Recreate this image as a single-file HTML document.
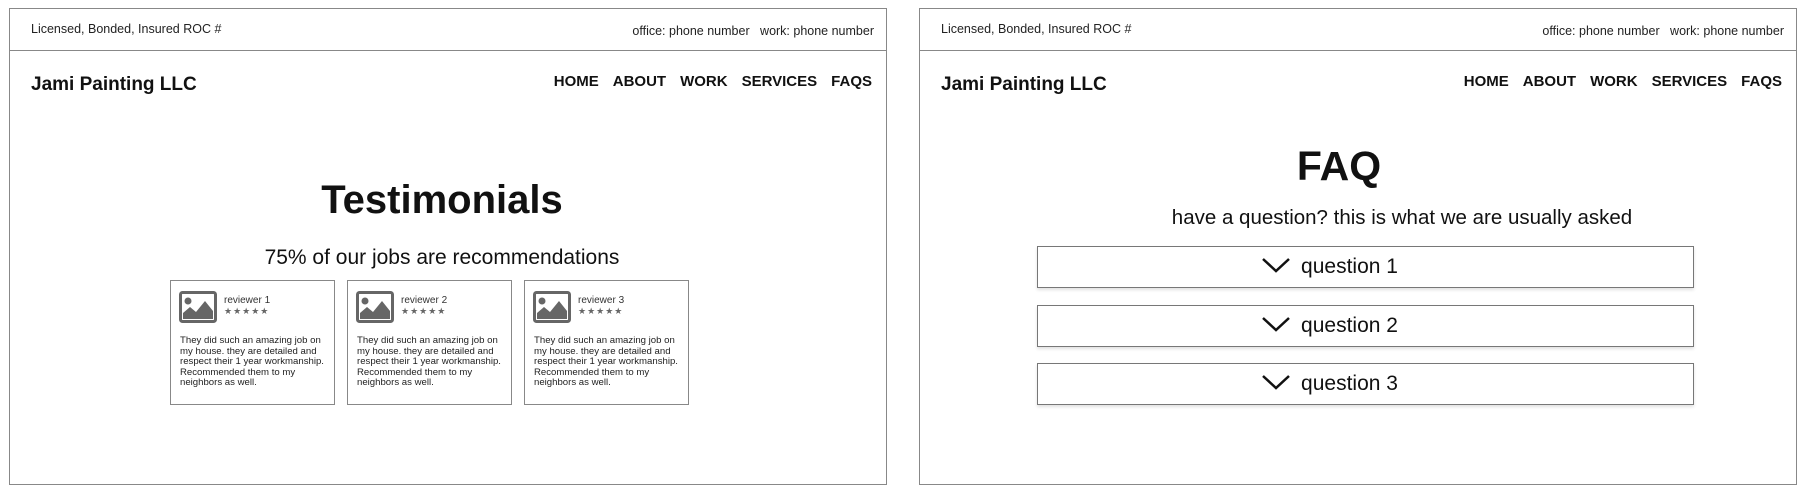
<!DOCTYPE html>
<html><head><meta charset="utf-8"><style>
*{margin:0;padding:0;box-sizing:border-box}
body{width:1810px;height:496px;background:#fff;position:relative;overflow:hidden;font-family:"Liberation Sans",Arial,sans-serif;color:#111}
.a{position:absolute;white-space:nowrap}
.panel{position:absolute;top:8px;height:477px;border:1px solid #888;width:878px}
.hline{position:absolute;left:0;right:0;top:41px;border-top:1px solid #888}
.lic{left:21px;top:13px;font-size:12.5px;color:#222}
.ph{right:12px;top:15px;font-size:12.5px;color:#222}
.logo{left:21px;top:65px;font-size:19px;font-weight:bold}
.nav{right:14px;top:64px;font-size:15px;font-weight:bold}
.nav span{margin-left:14px}
.card{position:absolute;top:280px;width:165px;height:125px;border:1px solid #888}
.card .img{position:absolute;left:8px;top:10px;width:38px;height:32px}
.card .rv{position:absolute;left:53px;top:14px;font-size:10px;color:#333}
.card .st{position:absolute;left:53px;top:25px;font-size:9px;color:#666;letter-spacing:1px}
.card .tx{position:absolute;left:9px;top:55px;font-size:9.6px;line-height:10.5px;color:#222;width:155px}
.q{position:absolute;left:117px;width:657px;height:42px;border:1px solid #777;box-shadow:0 2px 3px rgba(0,0,0,.12);font-size:21px;text-align:center;line-height:40px;padding-right:72px}
.q svg{vertical-align:middle;margin-right:10px;margin-top:-4px}
</style></head><body>
<div class="panel" style="left:9px">
 <div class="a lic">Licensed, Bonded, Insured ROC #</div>
 <div class="a ph">office: phone number &nbsp; work: phone number</div>
 <div class="hline"></div>
 <div class="a logo">Jami Painting LLC</div>
 <div class="a nav">HOME<span>ABOUT</span><span>WORK</span><span>SERVICES</span><span>FAQS</span></div>
 <div class="a" style="left:0;width:864px;text-align:center;top:169px;font-size:40px;font-weight:bold">Testimonials</div>
 <div class="a" style="left:0;width:864px;text-align:center;top:237px;font-size:21px">75% of our jobs are recommendations</div>
</div>
<div class="panel" style="left:919px">
 <div class="a lic">Licensed, Bonded, Insured ROC #</div>
 <div class="a ph">office: phone number &nbsp; work: phone number</div>
 <div class="hline"></div>
 <div class="a logo">Jami Painting LLC</div>
 <div class="a nav">HOME<span>ABOUT</span><span>WORK</span><span>SERVICES</span><span>FAQS</span></div>
 <div class="a" style="left:0;width:838px;text-align:center;top:134px;font-size:41px;font-weight:bold">FAQ</div>
 <div class="a" style="left:0;width:964px;text-align:center;top:197px;font-size:20.5px">have a question? this is what we are usually asked</div>
 <div class="q" style="top:237px"><svg width="30" height="18" viewBox="0 0 30 18"><path d="M2 3 L15 15 L28 3" fill="none" stroke="#111" stroke-width="2.5"/></svg>question 1</div>
 <div class="q" style="top:296px"><svg width="30" height="18" viewBox="0 0 30 18"><path d="M2 3 L15 15 L28 3" fill="none" stroke="#111" stroke-width="2.5"/></svg>question 2</div>
 <div class="q" style="top:354px"><svg width="30" height="18" viewBox="0 0 30 18"><path d="M2 3 L15 15 L28 3" fill="none" stroke="#111" stroke-width="2.5"/></svg>question 3</div>
</div>
<div class="card" style="left:170px"><svg class="img" viewBox="0 0 38 32"><rect x="1.5" y="1.5" width="35" height="29" rx="2" fill="none" stroke="#666" stroke-width="3"/><circle cx="9" cy="10" r="3.5" fill="#666"/><path d="M4 28 L4 22 L11 16 L17 21 L26 10 L34 20 L34 28Z" fill="#666"/></svg><div class="rv">reviewer 1</div><div class="st">★★★★★</div><div class="tx">They did such an amazing job on my house. they are detailed and respect their 1 year workmanship. Recommended them to my neighbors as well.</div></div>
<div class="card" style="left:347px"><svg class="img" viewBox="0 0 38 32"><rect x="1.5" y="1.5" width="35" height="29" rx="2" fill="none" stroke="#666" stroke-width="3"/><circle cx="9" cy="10" r="3.5" fill="#666"/><path d="M4 28 L4 22 L11 16 L17 21 L26 10 L34 20 L34 28Z" fill="#666"/></svg><div class="rv">reviewer 2</div><div class="st">★★★★★</div><div class="tx">They did such an amazing job on my house. they are detailed and respect their 1 year workmanship. Recommended them to my neighbors as well.</div></div>
<div class="card" style="left:524px"><svg class="img" viewBox="0 0 38 32"><rect x="1.5" y="1.5" width="35" height="29" rx="2" fill="none" stroke="#666" stroke-width="3"/><circle cx="9" cy="10" r="3.5" fill="#666"/><path d="M4 28 L4 22 L11 16 L17 21 L26 10 L34 20 L34 28Z" fill="#666"/></svg><div class="rv">reviewer 3</div><div class="st">★★★★★</div><div class="tx">They did such an amazing job on my house. they are detailed and respect their 1 year workmanship. Recommended them to my neighbors as well.</div></div>
</body></html>
